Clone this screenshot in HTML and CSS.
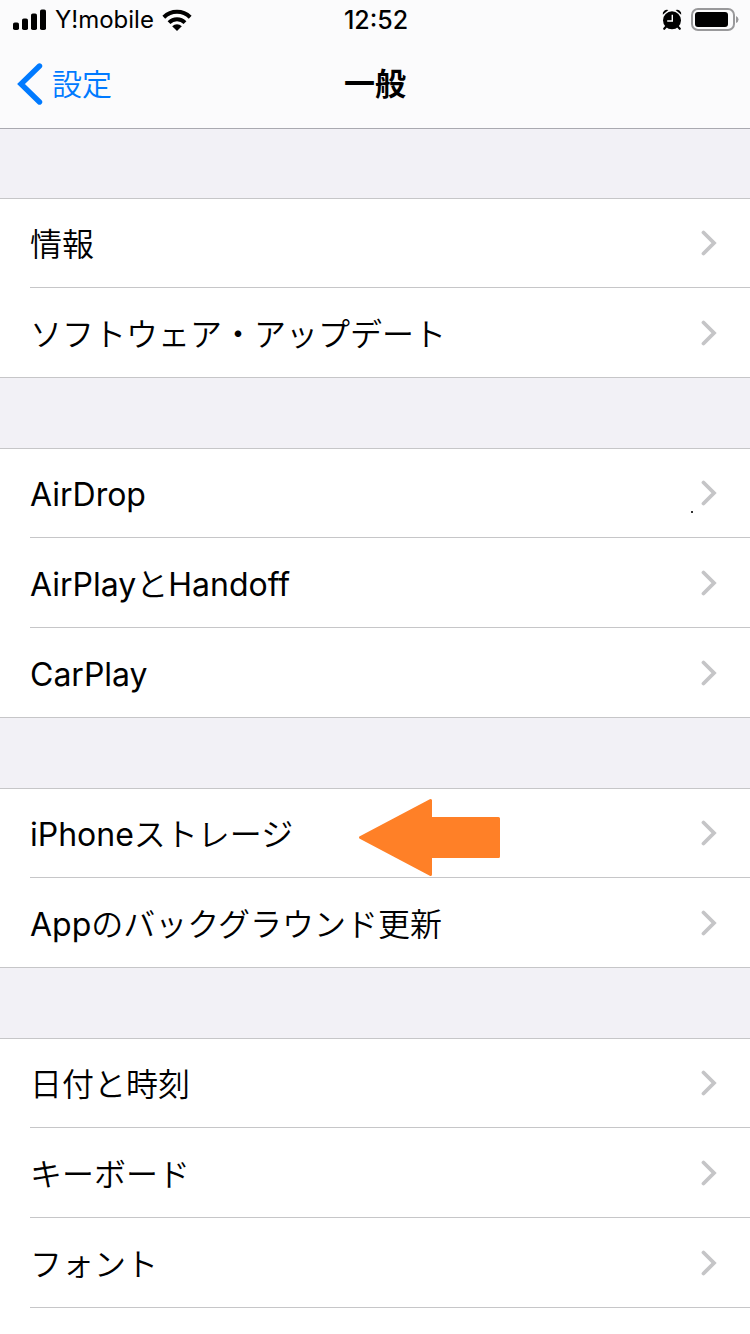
FILE: index.html
```html
<!DOCTYPE html>
<html lang="ja">
<head>
<meta charset="utf-8">
<meta name="viewport" content="width=device-width, initial-scale=1">
<title>一般</title>
<link rel="stylesheet" href="styles.css">
</head>
<body>
<svg class="defs" aria-hidden="true">
  <symbol id="chevron" viewBox="0 0 16 26"><path d="M2.5 2.5 13 13 2.5 23.5" fill="none" stroke="#c5c5c7" stroke-width="3.8" stroke-linecap="round"/></symbol>
</svg>
<div class="screen">
  <header class="top">
    <div class="status">
      <div class="status-side">
        <svg width="34" height="22" viewBox="0 0 34 22" aria-hidden="true"><rect x="0" y="13.5" width="6" height="7.5" rx="1.8"/><rect x="9" y="9.5" width="6" height="11.5" rx="1.8"/><rect x="18" y="4.5" width="6" height="16.5" rx="1.8"/><rect x="27" y=".5" width="6" height="20.5" rx="1.8"/></svg>
        <span class="carrier">Y!mobile</span>
        <svg width="30" height="22" viewBox="0 0 30 22" aria-hidden="true"><g fill="none" stroke="#000" stroke-width="4"><path d="M1.8 8.2A19 19 0 0 1 28.2 8.2"/><path d="M7 13.6A11.5 11.5 0 0 1 23 13.6"/></g><path d="M15 22 10.2 17.2A7 7 0 0 1 19.8 17.2Z"/></svg>
      </div>
      <span class="clock">12:52</span>
      <div class="status-side status-right">
        <svg width="20" height="22" viewBox="0 0 20 22" aria-hidden="true"><circle cx="10" cy="11.3" r="9"/><path d="M.8 5.8A4.2 4.2 0 0 1 6.4 1.1ZM19.2 5.8A4.2 4.2 0 0 0 13.6 1.1Z"/><path d="M4 17.8 2.2 19.8M16 17.8 17.8 19.8" stroke="#000" stroke-width="2.2" stroke-linecap="round"/><path d="M10.3 5.8V12H5.2" fill="none" stroke="#fff" stroke-width="1.4"/></svg>
        <svg width="48" height="24" viewBox="0 0 48 24" aria-hidden="true"><rect x="1" y="1" width="42" height="21" rx="6" fill="none" stroke="#99999b" stroke-width="2"/><rect x="4" y="4" width="33" height="15" rx="3"/><path d="M45 8Q47.5 9 47.5 11.5T45 15Z" fill="#99999b"/></svg>
      </div>
    </div>
    <nav class="bar">
      <a class="back" href="#"><svg width="26" height="42" viewBox="0 0 26 42" aria-hidden="true"><path d="M22.5 3 4 21 22.5 39" fill="none" stroke="#007aff" stroke-width="5.4" stroke-linecap="round" stroke-linejoin="miter"/></svg>設定</a>
      <h1 class="title">一般</h1>
    </nav>
  </header>
  <main class="groups">
    <ul class="group">
      <li class="item"><a class="row" href="#"><span class="label">情報</span><svg class="chevron"><use href="#chevron"/></svg></a></li>
      <li class="item"><a class="row" href="#"><span class="label">ソフトウェア・アップデート</span><svg class="chevron"><use href="#chevron"/></svg></a></li>
    </ul>
    <ul class="group">
      <li class="item"><a class="row" href="#"><span class="label">AirDrop</span><i class="speck"></i><svg class="chevron"><use href="#chevron"/></svg></a></li>
      <li class="item"><a class="row" href="#"><span class="label">AirPlayとHandoff</span><svg class="chevron"><use href="#chevron"/></svg></a></li>
      <li class="item"><a class="row" href="#"><span class="label">CarPlay</span><svg class="chevron"><use href="#chevron"/></svg></a></li>
    </ul>
    <ul class="group">
      <li class="item"><a class="row" href="#"><span class="label">iPhoneストレージ</span><svg class="chevron"><use href="#chevron"/></svg></a>
        <svg class="pointer" width="142" height="78" viewBox="0 0 142 78" aria-hidden="true"><path d="M2.5 39.5 72.5 2.5V20.5H140.5V58.5H72.5V76.5Z" fill="#ff8027" stroke="#ff8027" stroke-width="3" stroke-linejoin="round"/></svg>
      </li>
      <li class="item"><a class="row" href="#"><span class="label">Appのバックグラウンド更新</span><svg class="chevron"><use href="#chevron"/></svg></a></li>
    </ul>
    <ul class="group group-open">
      <li class="item"><a class="row" href="#"><span class="label">日付と時刻</span><svg class="chevron"><use href="#chevron"/></svg></a></li>
      <li class="item"><a class="row" href="#"><span class="label">キーボード</span><svg class="chevron"><use href="#chevron"/></svg></a></li>
      <li class="item"><a class="row" href="#"><span class="label">フォント</span><svg class="chevron"><use href="#chevron"/></svg></a></li>
    </ul>
  </main>
</div>
</body>
</html>
```
FILE: styles.css
```css
* { box-sizing: border-box; }
body {
  margin: 0;
  background: #f2f1f6;
  color: #000;
  font-family: Inter, "Noto Sans CJK JP DemiLight", "Noto Sans CJK JP", sans-serif;
}
a { color: inherit; text-decoration: none; }
.defs { position: absolute; width: 0; height: 0; }
.screen { display: flex; flex-direction: column; min-height: 100vh; }

.top { background: #fbfbfc; box-shadow: 0 1px #a9a9b0; }
.status {
  display: grid;
  grid-template-columns: 1fr auto 1fr;
  align-items: center;
  height: 40px;
  padding: 0 11px 0 13px;
}
.status-side { display: flex; align-items: center; gap: 8px; }
.status-right { justify-content: flex-end; gap: 9px; }
.carrier { font-size: 24px; line-height: 40px; }
.clock { font-size: 25px; font-weight: 500; line-height: 40px; }

.bar {
  display: grid;
  grid-template-columns: 1fr auto 1fr;
  align-items: center;
  height: 88px;
  padding: 0 17px;
}
.back { display: flex; align-items: center; gap: 9px; color: #007aff; font-size: 30px; line-height: 40px; }
.title { margin: 0; font-family: Inter, "Noto Sans CJK JP", sans-serif; font-size: 31px; font-weight: 700; line-height: 40px; }

.groups { display: flex; flex: 1; flex-direction: column; gap: 70px; padding-top: 70px; }
.group {
  margin: 0;
  padding: 0;
  list-style: none;
  background: #fff;
  box-shadow: inset 0 1px #c6c6c8;
}
.group-open { flex: 1; padding-bottom: 26px; }
.item { position: relative; padding-left: 30px; }
.row {
  display: flex;
  align-items: center;
  justify-content: space-between;
  height: 90px;
  padding-right: 33px;
  border-bottom: 1px solid #c6c6c8;
  font-size: 32px;
  line-height: 44px;
}
.group:not(.group-open) .item:last-child { border-bottom: 1px solid #c6c6c8; }
.group:not(.group-open) .item:last-child .row { height: 89px; border-bottom: 0; }
.label { padding-top: 4px; }
.chevron { flex: none; width: 16px; height: 26px; }
.speck { position: absolute; right: 57px; bottom: 25px; width: 2px; height: 2px; background: #333; }
.pointer { position: absolute; left: 358px; top: 10px; }
```
